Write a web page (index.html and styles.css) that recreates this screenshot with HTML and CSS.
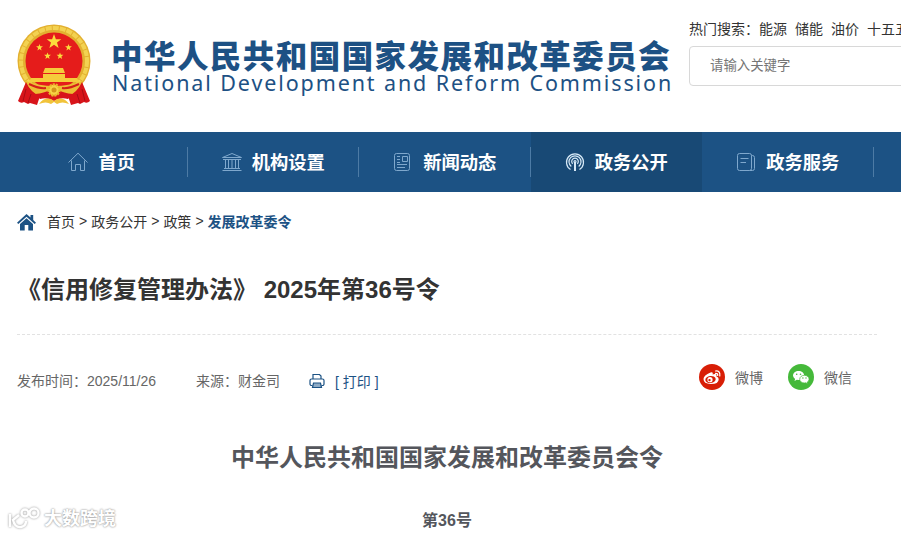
FILE: index.html
```
<!DOCTYPE html>
<html lang="zh-CN">

<head>
    <meta charset="utf-8">
    <title>《信用修复管理办法》 2025年第36号令</title>
    <link rel="stylesheet" href="styles.css">
</head>

<body>
    <header class="header">
        <svg class="emblem" viewBox="0 0 74 82">
            <circle cx="37" cy="37" r="36.5" fill="#e3b030" />
            <circle cx="37" cy="37" r="33" fill="none" stroke="#f3d251" stroke-width="4" stroke-dasharray="6 1" />
            <circle cx="37" cy="37" r="28.5" fill="#e51c1b" />
            <path d="M37 10l1.900 5.200h5.400l-4.300 3.400 1.600 5.400-4.600-3.200-4.600 3.200 1.600-5.400-4.300-3.400h5.400z" fill="#fbdc3c" />
            <g fill="#fbdc3c">
                <path id="small-star" d="M22.500 20l.9 2.300h2.500l-2 1.600.7 2.500-2.100-1.500-2.100 1.500.7-2.500-2-1.600h2.500z" />
                <use href="#small-star" x="29" />
                <use href="#small-star" x="8" y="8.500" />
                <use href="#small-star" x="20.500" y="8.500" />
            </g>
            <path d="M28 44h18l2 5H26zM26 50h22v4h12l2 4H12l2-4h12z" fill="#f6cb3b" />
            <path d="M9 57q13 5 28 5t28-5l2 11-4 6H11l-4-6z" fill="#ecbe34" />
            <path d="M12 60q10 5 17 4M62 60q-10 5-17 4" stroke="#d42019" stroke-width="2" fill="none" />
            <path d="M9 58L1 77q3 3 6 1l4 2 2-1 7 2 3-9q-9-3-14-14zM65 58l8 19q-3 3-6 1l-4 2-2-1-7 2-3-9q9-3 14-14z" fill="#d8141a" />
            <path d="M9 65l-3 12M14 70l-3 9M65 65l3 12M60 70l3 9" stroke="#a80d14" fill="none" />
            <path d="M18 70q10-1 14-4h10q4 3 14 4l-5 5q-8-2-14 2-6-4-14-2z" fill="#d8141a" />
            <circle cx="37" cy="66" r="5.500" fill="#f8d447" stroke="#e9b82a" stroke-width="2.500" stroke-dasharray="2 1" />
            <circle cx="37" cy="66" r="2.500" fill="#d5951c" />
            <path d="M22 80q5-7 12-5l3 2 3-2q7-2 12 5-7-3-12 0l-3-2-3 2q-5-3-12 0z" fill="#f1c33a" />
        </svg>
        <div class="brand">
            <div class="brand-cn">中华人民共和国国家发展和改革委员会</div>
            <div class="brand-en">National Development and Reform Commission</div>
        </div>
        <div class="search">
            <div class="hot">热门搜索：<a>能源</a><a>储能</a><a>油价</a><a>十五五</a></div>
            <input class="search-input" type="text" placeholder="请输入关键字">
        </div>
    </header>

    <nav class="nav">
        <a class="nav-item">
            <svg class="nav-icon" viewBox="0 0 20 20">
                <path d="M.5 10.500L10 1.200l9.500 9.300M3.500 8.500v10h4v-6h5v6h4v-10" />
            </svg><span>首页</span></a>
        <a class="nav-item">
            <svg class="nav-icon" viewBox="0 0 20 20">
                <path d="M.5 5.500L10 1.500l9.500 4zM1 7.500h18M3.500 8v9M6.500 8v9M10 8v9M13.500 8v9M16.500 8v9M2 16.500h16M.5 18.500h19" />
            </svg><span>机构设置</span></a>
        <a class="nav-item">
            <svg class="nav-icon news" viewBox="0 0 20 20">
                <rect x="2.500" y="1.500" width="15" height="17" rx="2" />
                <path d="M5 4.500h3M5 7.500h3M5 10.500h3M5 12.500h10M5 15.500h8M10.500 4.500h5v5h-5z" />
            </svg><span>新闻动态</span></a>
        <a class="nav-item active">
            <svg class="nav-icon" viewBox="0 0 20 20">
                <path d="M5.500 17.500a8.500 8.500 0 1 1 9 0M6.300 14.500a6 6 0 1 1 7.400 0M7.700 11.800a3.300 3.300 0 1 1 4.600 0" />
                <circle cx="10" cy="9.500" r="1" />
                <path d="M10 10v9" stroke-width="2" />
            </svg><span>政务公开</span></a>
        <a class="nav-item">
            <svg class="nav-icon" viewBox="0 0 20 20">
                <rect x="1.500" y="1.500" width="14" height="17" rx="2" />
                <path d="M4.500 6.500h8M4.500 10.500h5.500M15.500 3.500h1a2 2 0 0 1 2 2v11a2 2 0 0 1-2 2h-3" />
            </svg><span>政务服务</span></a>
        <a class="nav-item"></a>
    </nav>

    <div class="crumbs">
        <svg class="crumb-icon" viewBox="0 0 19 17">
            <path d="M0 8.700L9.500 0l4 3.600V1h2.700v5.100L19 8.700l-1.300 1.400L9.500 2.700 1.300 10.100z" />
            <path d="M3 10l6.500-5.800L16 10v6.500h-4.700V11H7.700v5.500H3z" />
        </svg>
        <a>首页</a> &gt; <a>政务公开</a> &gt; <a>政策</a> &gt; <a class="current">发展改革委令</a>
    </div>

    <main class="article">
        <h1 class="title">《信用修复管理办法》 2025年第36号令</h1>
        <div class="meta">
            <span class="date">发布时间：2025/11/26</span>
            <span class="source">来源：财金司</span>
            <a class="print">
                <svg class="print-icon" viewBox="0 0 16 16">
                    <path d="M4 6V1.500h6.500L12 3v3M3.500 12.500h-1a1.500 1.500 0 0 1-1.500-1.500V7.500Q1 6 2.500 6h11Q15 6 15 7.500V11a1.500 1.500 0 0 1-1.500 1.500h-1" />
                    <path d="M4.500 10h7l1 4.500h-9z" fill="#8eabc5" />
                </svg>[ 打印 ]</a>
            <div class="share">
                <a class="share-item">
                    <svg class="share-icon" viewBox="0 0 26 26">
                        <circle cx="13" cy="13" r="13" fill="#d81e06" />
                        <path d="M11.500 8.500q2-.8 2.300.7l-.2 1.300q4-1.200 4 1l-.2.9q2.300.7 2.300 2.800 0 4.800-7.800 4.900-7.400-.2-7.400-5 .1-4 7-6.600z" fill="#fff" />
                        <ellipse cx="11.500" cy="15.500" rx="5.200" ry="3.500" transform="rotate(-8 11.500 15.500)" fill="#d81e06" />
                        <circle cx="11" cy="15.700" r="2.600" fill="#fff" />
                        <circle cx="10.500" cy="16.100" r="1.200" fill="#d81e06" />
                        <path d="M16.500 7q5-.5 4.300 5M16.500 9.300q2.500-.2 2.200 2.200" fill="none" stroke="#fff" stroke-width="1.200" stroke-linecap="round" />
                    </svg>微博</a>
                <a class="share-item">
                    <svg class="share-icon" viewBox="0 0 26 26">
                        <circle cx="13" cy="13" r="13" fill="#45b93a" />
                        <path d="M6.500 17l.6-2.100Q5 13.400 5 11.600C5 9 7.500 7 10.600 7s5.600 2 5.600 4.600-2.500 4.500-5.600 4.500l-1.800-.3z" fill="#fff" />
                        <path d="M19.500 19.800l-.4-1.500q2-1.200 2-3.100c0-2.200-2.100-3.900-4.700-3.900s-4.700 1.700-4.700 3.900 2.100 3.800 4.700 3.800l1.300-.2z" fill="#fff" stroke="#45b93a" stroke-width=".7" />
                        <g fill="#45b93a">
                            <circle cx="8.700" cy="10.300" r=".8" />
                            <circle cx="12.500" cy="10.300" r=".8" />
                            <circle cx="14.900" cy="14" r=".7" />
                            <circle cx="18" cy="14" r=".7" />
                        </g>
                    </svg>微信</a>
            </div>
        </div>
        <h2 class="order-title">中华人民共和国国家发展和改革委员会令</h2>
        <p class="order-no">第36号</p>
    </main>

    <div class="watermark">
        <svg class="watermark-icon" viewBox="0 0 34 26">
            <g fill="none">
                <path d="M3 8v13M12 9l-6 5q2 8 8 7 5-1 5-6" />
                <circle cx="18" cy="7" r="3.500" />
                <circle cx="27" cy="7" r="4.500" />
            </g>
        </svg>大数跨境
    </div>
</body>

</html>
```
FILE: styles.css
```
* {
    box-sizing: border-box;
}

body {
    margin: 0;
    height: 536px;
    overflow: hidden;
    background-color: #fff;
    color: #333;
    font-family: "Liberation Sans", "Noto Sans CJK SC", sans-serif;
    font-size: 14px;
}

.header {
    display: flex;
    align-items: flex-start;
    height: 132px;
    padding-left: 17px;
}

.emblem {
    flex: none;
    width: 74px;
    height: 82px;
    margin-top: 24px;
}

.brand {
    flex: none;
    width: 598px;
    padding: 36px 0 0 20px;
    color: #1d5184;
    white-space: nowrap;
}

.brand-cn {
    font-size: 31.5px;
    font-weight: 900;
    line-height: 42px;
    letter-spacing: 1.45px;
}

.brand-en {
    margin: -7px 0 0 1px;
    font-family: "Noto Sans", sans-serif;
    font-size: 21.5px;
    line-height: 24px;
    letter-spacing: 1.89px;
}

.search {
    flex: none;
    width: 360px;
    padding-top: 19px;
}

.hot {
    line-height: 20px;
    white-space: nowrap;
}

.hot a {
    margin-right: 8px;
}

.search-input {
    display: block;
    width: 360px;
    height: 40px;
    margin-top: 7px;
    padding: 0 20px 2px;
    border: 1px solid #d8d8d8;
    border-radius: 4px;
    font-family: inherit;
    font-size: 13.4px;
}

.search-input::placeholder {
    color: #757575;
}

.nav {
    display: flex;
    height: 60px;
    padding-left: 16px;
    background-color: #1c5284;
}

.nav-item {
    display: flex;
    flex: none;
    align-items: center;
    justify-content: center;
    width: 171.5px;
    color: #fff;
    font-size: 18.3px;
    font-weight: bold;
    background: linear-gradient(#4d7ba5, #4d7ba5) right center / 1px 30px no-repeat;
}

.nav-item span {
    padding-bottom: 2px;
}

.nav-item.active {
    background: #184975;
}

.nav-icon {
    width: 20px;
    height: 20px;
    margin-right: 10px;
    fill: none;
    stroke: #7fa8cd;
    stroke-width: 1;
}

.nav-icon.news {
    margin: 0 11px 0 -1px;
}

.active .nav-icon {
    stroke: #d5e8f6;
    stroke-width: 1.2;
}

.crumbs {
    display: flex;
    align-items: center;
    gap: 4px;
    height: 60px;
    padding: 0 0 2px 17px;
}

.crumb-icon {
    width: 19px;
    height: 17px;
    margin: 2px 7px 0 0;
    fill: #1c5284;
}

.current {
    color: #1c5284;
    font-weight: bold;
}

.article {
    width: 860px;
    margin-left: 17px;
}

.title {
    margin: 0;
    height: 83px;
    padding-top: 20px;
    border-bottom: 1px dashed #e2e2e2;
    font-size: 24px;
    line-height: 36px;
}

.meta {
    display: flex;
    align-items: center;
    height: 93px;
    padding-bottom: 3px;
    color: #666;
}

.source {
    margin-left: 40px;
}

.print {
    display: flex;
    align-items: center;
    margin: 1px 0 0 29px;
    color: #1c5284;
}

.print-icon {
    width: 16px;
    height: 16px;
    margin-right: 10px;
    fill: none;
    stroke: #1c5284;
    stroke-width: 1.2;
}

.share {
    display: flex;
    gap: 25px;
    margin: -6px 25px 0 auto;
}

.share-item {
    display: flex;
    align-items: center;
}

.share-icon {
    width: 26px;
    height: 26px;
    margin-right: 10px;
}

.order-title {
    margin: 12px 0 0;
    color: #54565c;
    font-size: 24px;
    line-height: 36px;
    text-align: center;
}

.order-no {
    margin: 33px 0 0;
    color: #54565c;
    font-size: 16px;
    font-weight: bold;
    line-height: 24px;
    text-align: center;
}

.watermark {
    position: absolute;
    left: 7px;
    top: 505px;
    display: flex;
    align-items: center;
    color: #fff;
    font-size: 18px;
    font-weight: bold;
    line-height: 28px;
    text-shadow: 0 0 2px #999, 0 0 2px #bbb;
}

.watermark-icon {
    width: 34px;
    height: 26px;
    margin-right: 3px;
    stroke: #fff;
    stroke-width: 2.4;
    filter: drop-shadow(0 0 1px #999);
}
```
